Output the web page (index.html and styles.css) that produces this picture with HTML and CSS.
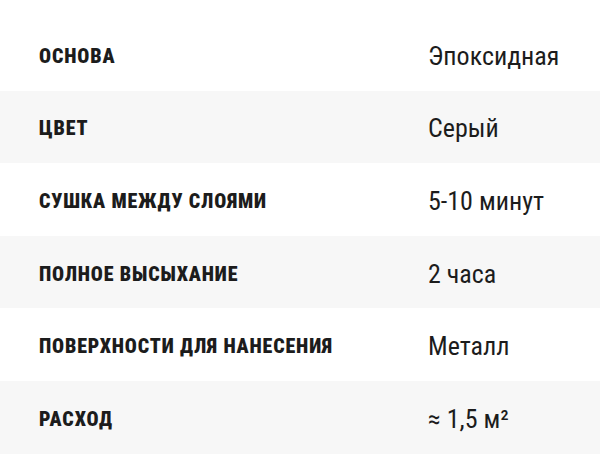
FILE: index.html
```html
<!DOCTYPE html>
<html lang="ru">
<head>
<meta charset="utf-8">
<link rel="stylesheet" href="styles.css">
</head>
<body>
<div class="specs">
  <div class="row"><div class="label">Основа</div><div class="value">Эпоксидная</div></div>
  <div class="row alt"><div class="label">Цвет</div><div class="value">Серый</div></div>
  <div class="row"><div class="label">Сушка между слоями</div><div class="value">5-10 минут</div></div>
  <div class="row alt"><div class="label">Полное высыхание</div><div class="value">2 часа</div></div>
  <div class="row"><div class="label">Поверхности для нанесения</div><div class="value">Металл</div></div>
  <div class="row alt"><div class="label">Расход</div><div class="value">≈ 1,5 м²</div></div>
</div>
</body>
</html>
```
FILE: styles.css
```css
html, body {
  margin: 0;
  padding: 0;
  background: #ffffff;
}
body {
  font-family: Roboto, "Noto Sans", sans-serif;
  color: #1c1c1c;
}
.specs {
  padding-top: 18px;
  display: flex;
  flex-direction: column;
}
.row {
  display: grid;
  grid-template-columns: 389px 1fr;
  align-items: center;
  height: 72.6px;
  padding-left: 39px;
}
.row.alt {
  background: #f7f7f7;
}
.label {
  font-size: 20px;
  font-weight: 900;
  font-stretch: 75%;
  letter-spacing: 0.85px;
  text-transform: uppercase;
  padding-top: 3px;
}
.value {
  font-size: 26px;
  font-weight: 400;
  font-stretch: 75%;
  padding-top: 3px;
}
```
